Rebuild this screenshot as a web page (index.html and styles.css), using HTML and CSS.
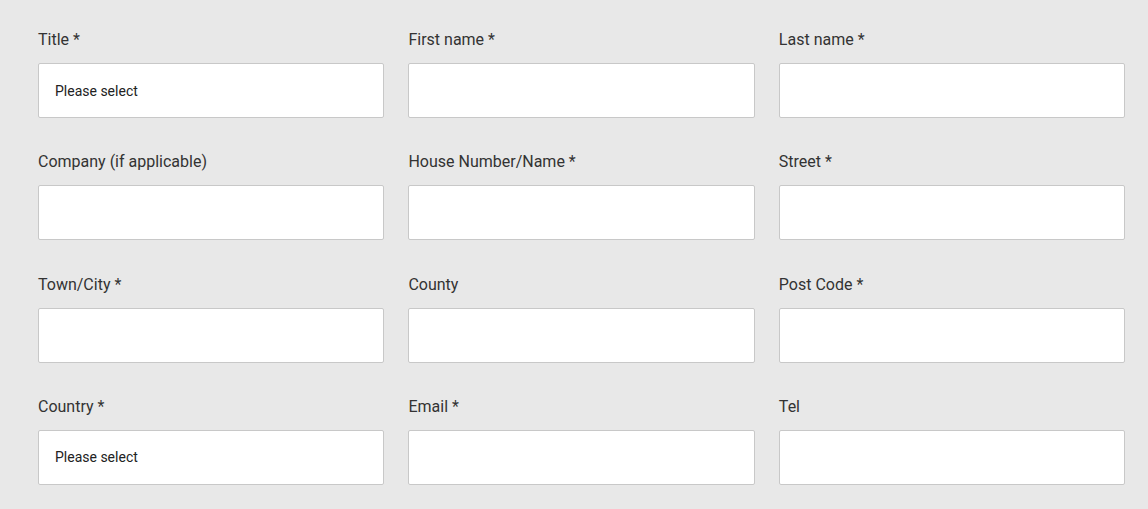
FILE: index.html
```html
<!DOCTYPE html>
<html lang="en">
<head>
<meta charset="utf-8">
<title>Address form</title>
<link rel="stylesheet" href="styles.css">
</head>
<body>
<form class="form">
  <div class="field"><label class="label">Title *</label><div class="input select">Please select</div></div>
  <div class="field"><label class="label">First name *</label><div class="input"></div></div>
  <div class="field"><label class="label">Last name *</label><div class="input"></div></div>
  <div class="field"><label class="label">Company (if applicable)</label><div class="input"></div></div>
  <div class="field"><label class="label">House Number/Name *</label><div class="input"></div></div>
  <div class="field"><label class="label">Street *</label><div class="input"></div></div>
  <div class="field"><label class="label">Town/City *</label><div class="input"></div></div>
  <div class="field"><label class="label">County</label><div class="input"></div></div>
  <div class="field"><label class="label">Post Code *</label><div class="input"></div></div>
  <div class="field"><label class="label">Country *</label><div class="input select">Please select</div></div>
  <div class="field"><label class="label">Email *</label><div class="input"></div></div>
  <div class="field"><label class="label">Tel</label><div class="input"></div></div>
</form>
</body>
</html>
```
FILE: styles.css
```css
html, body {
  margin: 0;
  padding: 0;
  background: #e8e8e8;
}
body {
  font-family: Roboto, "Liberation Sans", Arial, sans-serif;
  color: #333;
}
.form {
  width: 1087px;
  padding: 28px 0 0 38px;
  display: grid;
  grid-template-columns: repeat(3, 1fr);
  column-gap: 24.3px;
  row-gap: 32.3px;
}
.field {
  display: flex;
  flex-direction: column;
  gap: 11px;
}
.label {
  font-size: 16px;
  line-height: 24px;
  color: #333;
}
.input {
  box-sizing: border-box;
  height: 55px;
  background: #fff;
  border: 1px solid #c8c8c8;
  border-radius: 2px;
  display: flex;
  align-items: center;
  padding-left: 16px;
  font-size: 14px;
  color: #222;
}
```
